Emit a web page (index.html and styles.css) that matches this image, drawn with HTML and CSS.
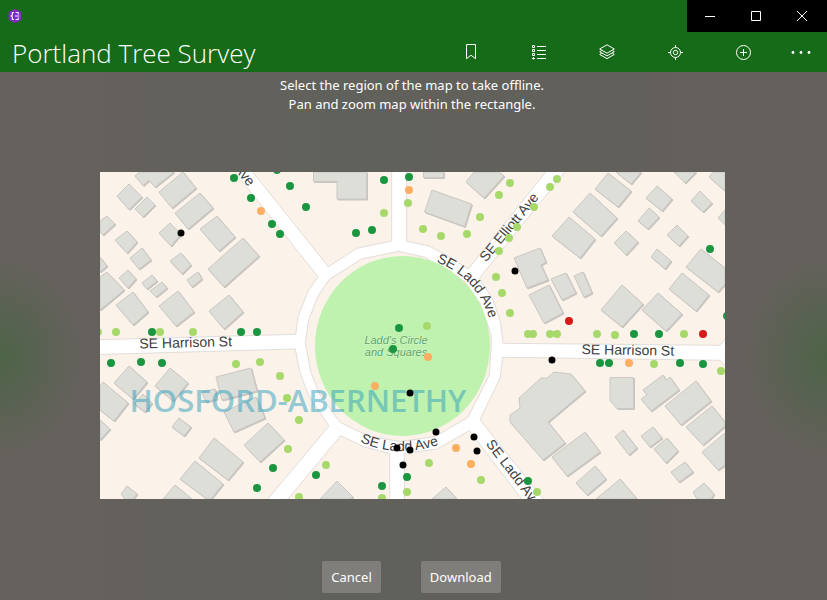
FILE: index.html
```html
<!DOCTYPE html>
<html lang="en">
<head>
<meta charset="utf-8">
<title>Portland Tree Survey</title>
<link rel="stylesheet" href="styles.css">
</head>
<body>
<header class="app-header">
  <div class="titlebar">
    <svg class="app-logo" viewBox="0 0 14 16" aria-hidden="true">
      <path d="M7 .8 13.400 4v8L7 15.200.6 12V4z" fill="#7a2fc0"/>
      <path d="M6 4.500H4.400v2.400L3 8l1.400 1.100v2.400H6M7.600 4.500h2.600v2M7.600 11.500h2.600v-2M7 8h4.500" fill="none" stroke="#f0e4fa" stroke-width="1.200"/>
    </svg>
    <div class="window-controls">
      <button class="window-button" type="button" aria-label="Minimize"><svg viewBox="0 0 10 10"><path d="M0 5.500h10"/></svg></button>
      <button class="window-button" type="button" aria-label="Maximize"><svg viewBox="0 0 10 10"><path d="M.5.5h9v9h-9z"/></svg></button>
      <button class="window-button" type="button" aria-label="Close"><svg viewBox="0 0 10 10"><path d="M0 0l10 10M10 0 0 10"/></svg></button>
    </div>
  </div>
  <div class="command-bar">
    <h1 class="app-title">Portland Tree Survey</h1>
    <nav class="commands">
      <button class="command" type="button" aria-label="Bookmarks"><svg viewBox="0 0 16 16"><path d="M3.500.5h9v14.200L8 11.200l-4.500 3.500z"/></svg></button>
      <button class="command" type="button" aria-label="Legend"><svg viewBox="0 0 16 16"><path d="M6 2.500h9M6 6.500h9M6 10.500h9M6 14.500h9M1.500 1.500h2v2h-2zM1.500 5.500h2v2h-2zM1.500 9.500h2v2h-2zM1 14.500h3M2.500 13v2.500"/></svg></button>
      <button class="command" type="button" aria-label="Layers"><svg viewBox="0 0 16 16"><path d="M8 .8 15.300 5 8 9.200.7 5zM2.700 6.500.7 7.700 8 11.900l7.300-4.200-2-1.200M2.700 9.200l-2 1.200L8 14.700l7.300-4.300-2-1.200"/></svg></button>
      <button class="command" type="button" aria-label="My location"><svg viewBox="0 0 16 16"><circle cx="8.500" cy="8.500" r="5"/><circle cx="8.500" cy="8.500" r="2.200"/><path d="M8.500 1v2.500M8.500 13.500V16M1 8.500h2.500M13.500 8.500H16"/></svg></button>
      <button class="command" type="button" aria-label="Add tree"><svg viewBox="0 0 16 16"><circle cx="8.500" cy="8.500" r="7"/><path d="M8.500 5v7M5 8.500h7"/></svg></button>
      <button class="command command-more" type="button" aria-label="More"><svg class="dots" viewBox="0 0 20 16"><circle cx="2" cy="8.500" r="1.400"/><circle cx="10" cy="8.500" r="1.400"/><circle cx="18" cy="8.500" r="1.400"/></svg></button>
    </nav>
  </div>
</header>
<main class="offline">
  <p class="prompt">Select the region of the map to take offline.<br>Pan and zoom map within the rectangle.</p>
  <div class="map-frame">
    <svg class="map" viewBox="100 172 625 327" role="img" aria-label="Map of Ladd's Circle">
      <defs>
        <path id="ring-ne" d="M436 262Q477 277 490 321"/>
        <path id="ring-s" d="M360 442Q402 460 446 442"/>
        <g id="buildings">
          <path d="M135 176l4-4h35l-19 15-6-6.500-6 5z"/>
          <path d="M129 184l13 13-13 12.500L117 196zM147 197l8 8-12 12-8-8zM183 172l13 16-24 20-13-16zM200 193l13 15-25 21-13-16z"/>
          <path d="M107 216l8 8-12 11-3-3v-11zM127 231l10 11-10 11-12-13zM142 248l9 12-12 9-9-11zM170 223l11 11-10 12-12-13zM217 216l18 21-16 14-19-22zM243 238l16 18-35 31-16-18z"/>
          <path d="M181 253l10 12-9 9-12-13zM198 272l4 7-10 8-5-7zM100 257l7 9-7 6zM107 272l17 18-24 20v-33zM128 270l8 9-8 9-9-10zM152 275l5 6-10 8-5-6zM162 282l5 6-11 9-6-6z"/>
          <path d="M133 292l15 20-15 13-17-20zM178 291l16 21-18 14-17-20zM229 295l14 17-19 17-15-18z"/>
          <path d="M313.500 172v9.500h23.500V199h29.500v-27zM423.500 172v5.500h20V172zM432 190l39.500 14-7 22.500-40-14.500zM474 172h25l5 4-20 22-18-16z"/>
          <path d="M514 258l26-10 6 14-5 3 7 15-21 8zM551 279l15-6 10 20-14 7zM529 295l20-10 14 28-19 10zM574 276l9-4 9 21-8 4z"/>
          <path d="M608 173l23 18-13 16-23-18zM616 172h25l-10 12zM590 193l27 25-16 18-28-24zM569 217l26 22-15 19-28-22zM674 172h22l-11 11zM657 186l15 13-10 12-16-13zM649 208l10 9-11 12-10-8z"/>
          <path d="M700 191l12 12-9 9-12-11zM713 172h12v19l-16-14zM725 210l-7 8 7 7zM677 225l11 11-9 10-12-11zM626 231l12 11-12 13-12-12zM657 249l14 12-6 8-14-12z"/>
          <path d="M701 249l24 19v16l-7 8-32-25zM682 273l27 22-13 16-27-22zM622 285l21 19-21 23-21-17zM658 293l24 21-16 17-24-21z"/>
          <path d="M129 366l18 16-14 17-19-16zM170 368l18 15-15 18-18-15zM103 382l25 21-14 18-14-11v-24zM100 420l10 9-10 11zM143 394l9 9-7 9-11-8zM202 392l13-3 2 10-11 3z"/>
          <path d="M216 377l35-9 6 23-35 9zM224 412l32-15 9 21-31 14zM179 418l12 9-7 9-12-9zM214 438l29 24-15 18-29-22zM195 461l28 23-12 15h-4l-27-20zM175 485l17 14h-29zM127 486l10 8-4 5h-8l-4-5zM268 423l16 17-24 22-16-17zM337 481l16 16-3 2h-30zM446 487l11 12h-25z"/>
          <path d="M554 372l17 2 14 17-37 31 17 21-22 17-33-38v-7l10-7-1-10 22-20h6zM552 457l33-25 15 20-33 24z"/>
          <path d="M610 377.500h23.500v31H617l-7-8zM663 375l3 5 4-3 9 13-28 21-10-12 6-4-4-5zM696 381l15 20-30 24-16-19zM712 406l13 16v4l-22 19-17-18zM725 433l-23 19 16 18 7-5z"/>
          <path d="M623 430l14 18-8 7-14-18zM653 427l9 11-12 9-9-11zM667 438l11 13-12 12-12-14zM685 462l8 10-14 10-8-10zM595 466l11 13-19 16-11-12zM620 479l17 20h-41zM704 483l10 11-3 5h-14l-4-7z"/>
        </g>
      </defs>
      <rect x="100" y="172" width="625" height="327" fill="#fbf2e9"/>
      <use href="#buildings" class="building-shadow" x="1" y="1"/>
      <use href="#buildings" class="building"/>
      <path class="road" fill-rule="evenodd" d="M234 171 318 276.700 308 291 298 316.700 295.700 334.300 99 339.700V354.500L295.300 349 300 373.300 309.300 396.700 329 426 267 500H287L340.700 435.700 363.300 446.700 389.700 453.300V500H404.500V453.300L437.300 449 469.300 430.700 522.500 500H544L480 419.700 500 378.300 502.700 357.300 720 360.300 726 367V338L720 345.300 503.300 343.300 500 320 492.300 298.300 479.300 278.300 565.500 171H546.500L468.300 269 448 256 429.300 246 406.700 241.300V171H391.700V241L356.700 248.300 328.300 266.700 252 171ZM398.700 251.300 425 257.300 465 281.700 480 303.300 491 334.300 491.300 345 489.300 375 468 417.300 435 436.700 400 441.500 368 436 340 422.300 320 395 310.700 371.700 305.300 342.700 308.700 320 318 296 329.300 279.300 361.700 259Z"/>
      <ellipse cx="402.500" cy="346" rx="87.500" ry="90" fill="#bff2ae"/>
      <g class="street">
        <text transform="translate(139.500 348.500) rotate(-1.500)">SE Harrison St</text>
        <text transform="translate(581.500 354) rotate(1)">SE Harrison St</text>
        <text transform="translate(486 262.500) rotate(-50.500)">SE Elliott Ave</text>
        <text transform="translate(485.500 444) rotate(52.500)">SE Ladd Ave</text>
        <text transform="translate(248.500 187) rotate(51)" text-anchor="end">Ave</text>
        <text><textPath href="#ring-ne">SE Ladd Ave</textPath></text>
        <text><textPath href="#ring-s">SE Ladd Ave</textPath></text>
      </g>
      <g class="park-name">
        <text x="396" y="344" text-anchor="middle">Ladd's Circle</text>
        <text x="396" y="356" text-anchor="middle">and Squares</text>
      </g>
      <path class="tree good" d="M234 178h0M251 198h0M272 224h0M280 234h0M277 170h0M290 186h0M306 207h0M384 180h0M409 177h0M356 233h0M372 230h0M710 249h0M727 316h0M152 332h0M634 334h0M659 334h0M241 332h0M257 332h0M111 363h0M141 362h0M162 363h0M600 363h0M609 363h0M680 363h0M703 364h0M399 328h0M393 349h0M273 468h0M257 488h0M316 475h0M382 486h0M407 477h0M528 481h0"/>
      <path class="tree fair" d="M408 203h0M384 213h0M423 229h0M441 236h0M467 234h0M480 217h0M499 195h0M510 183h0M534 207h0M557 179h0M550 187h0M517 227h0M509 238h0M499 251h0M496 277h0M502 293h0M510 313h0M116 332h0M160 332h0M193 332h0M98 332h0M528 334h0M533 334h0M550 334h0M557 334h0M597 334h0M615 335h0M684 334h0M654 364h0M721 371h0M236 364h0M260 362h0M280 376h0M287 398h0M299 420h0M288 449h0M326 465h0M299 497h0M382 498h0M407 492h0M429 463h0M481 480h0M537 492h0M427 326h0"/>
      <path class="tree poor" d="M409 190h0M261 211h0M428 357h0M375 386h0M456 448h0M471 464h0M629 363h0"/>
      <path class="tree critical" d="M569 321h0M703 334h0"/>
      <path class="tree dead" d="M181 233h0M515 271h0M552 360h0M436 432h0M474 437h0M477 451h0M397 448h0M410 450h0M403 465h0"/>
      <text class="district" x="298" y="412" text-anchor="middle">HOSFORD-ABERNETHY</text>
      <path class="tree dead" d="M410 393h0"/>
    </svg>
  </div>
  <div class="actions">
    <button class="action" type="button">Cancel</button>
    <button class="action" type="button">Download</button>
  </div>
</main>
</body>
</html>
```
FILE: styles.css
```css
* { box-sizing: border-box; }

body {
  margin: 0;
  min-height: 100vh;
  display: flex;
  flex-direction: column;
  background: #63615c;
  color: #fff;
  font-family: "Noto Sans", "Open Sans", sans-serif;
  font-size: 13px;
}

button {
  margin: 0;
  padding: 0;
  border: 0;
  background: none;
  color: inherit;
  font: inherit;
}

.app-header { background: #156b17; }

.titlebar {
  display: flex;
  justify-content: space-between;
  align-items: center;
  height: 32px;
  padding-left: 8px;
}

.app-logo { width: 14px; height: 16px; }

.window-controls {
  display: flex;
  height: 32px;
  padding-right: 2px;
  background: #000;
}

.window-button {
  display: flex;
  align-items: center;
  justify-content: center;
  width: 46px;
}

.window-button svg {
  width: 10px;
  height: 10px;
  fill: none;
  stroke: #fff;
}

.command-bar {
  display: flex;
  justify-content: space-between;
  height: 40px;
  padding: 0 2px 0 12px;
}

.app-title {
  margin: 0;
  font-family: "Open Sans", "Noto Sans", sans-serif;
  font-size: 26px;
  font-weight: 300;
  line-height: 42px;
  white-space: nowrap;
}

.commands { display: flex; }

.command {
  display: flex;
  align-items: center;
  justify-content: center;
  width: 68px;
}

.command-more { width: 48px; }

.command svg {
  width: 16px;
  height: 16px;
  fill: none;
  stroke: #fff;
}

.command .dots {
  width: 20px;
  fill: #fff;
  stroke: none;
}

.offline {
  flex: 1;
  display: flex;
  flex-direction: column;
  justify-content: space-between;
  padding: 4px 0 7px;
  background:
    radial-gradient(ellipse 80px 100px at 0 54%, #4d6447, transparent),
    radial-gradient(ellipse 80px 100px at 100% 54%, #4d6447, transparent),
    linear-gradient(90deg, #66615d, #61615c 40%, #61605b 60%, #65605c);
}

.prompt {
  margin: 0;
  padding-right: 3px;
  line-height: 19px;
  text-align: center;
}

.map-frame { padding: 0 102px 4px 100px; }

.map { display: block; width: 100%; }

.building { fill: #deded9; stroke: #cbc8c4; }
.building-shadow { fill: #c8c5c1; stroke: #c8c5c1; }
.road { fill: #fff; stroke: #e2ddd9; }

.street {
  fill: #404040;
  font-family: "Liberation Sans", sans-serif;
  font-size: 14px;
}

.park-name {
  fill: #58a660;
  stroke: #dcf5d2;
  stroke-width: 1px;
  paint-order: stroke;
  font-family: "Liberation Sans", sans-serif;
  font-size: 11px;
  font-style: italic;
}

.tree { fill: none; stroke-width: 8px; stroke-linecap: round; }
.good { stroke: #1a9641; }
.fair { stroke: #a6d96a; }
.poor { stroke: #fdae61; }
.critical { stroke: #d7191c; }
.dead { stroke: #000; stroke-width: 7px; }

.district {
  fill: #2f9fbd;
  opacity: .5;
  font-family: "Open Sans", "Noto Sans", sans-serif;
  font-size: 31px;
  font-weight: 600;
}

.actions {
  display: flex;
  justify-content: center;
  gap: 40px;
  padding-right: 4px;
}

.action {
  height: 32px;
  padding: 0 9px;
  border-radius: 2px;
  background: #7f7e7b;
}
```
